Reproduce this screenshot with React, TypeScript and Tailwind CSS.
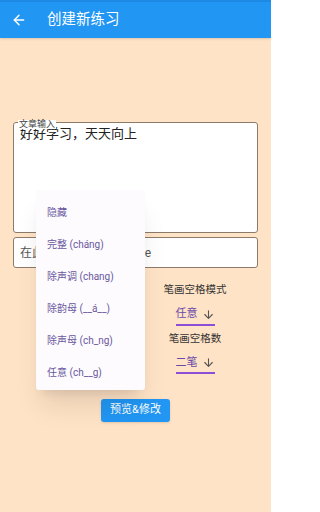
import React from 'react';
import { ArrowLeft, ArrowDown } from 'lucide-react';

const font = { fontFamily: 'Roboto, "Noto Sans CJK SC", sans-serif' };

const menuItems = ['隐藏', '完整 (cháng)', '除声调 (chang)', '除韵母 (__á__)', '除声母 (ch_ng)', '任意 (ch__g)'];

const Picker = ({ value }: { value: string }) => (
  <div className="flex items-center gap-1 border-b-2 border-[#8b4fd8] pb-[1px] text-[11px] text-[#6a4aa8]">
    <span>{value}</span>
    <ArrowDown size={13} strokeWidth={2} className="text-[#555]" />
  </div>
);

const App = () => {
  return (
    <div className="relative w-[271px] h-[512px] bg-[#ffe3c6] overflow-hidden" style={font}>
      {/* app bar */}
      <div className="h-[38px] bg-[#2196f3] border-t-2 border-[#1e88e5] flex items-center shadow">
        <ArrowLeft size={16} strokeWidth={2.2} className="text-white ml-[11px]" />
        <span className="ml-[20px] text-white text-[14.5px]">创建新练习</span>
      </div>

      <div className="px-[13px] pt-[84px] flex flex-col">
        {/* text area */}
        <div className="relative h-[111px] bg-white border border-[#8c7b6b] rounded-[3px] px-[6px] pt-[3px]">
          <span className="absolute -top-[3px] left-[4px] bg-white px-[1px] text-[9px] leading-none text-[#444]">文章输入</span>
          <p className="text-[13px] leading-[16px] text-[#222]">好好学习，天天向上</p>
        </div>

        {/* title input */}
        <div className="mt-[4px] h-[31px] bg-white border border-[#8c7b6b] rounded-[3px] px-[6px] flex items-center">
          <span className="text-[12px] text-[#555] whitespace-nowrap">在此输入练习的标题 title</span>
        </div>

        {/* settings */}
        <div className="mt-[14px] ml-[137px] w-[90px] flex flex-col items-center text-[10.5px] text-[#333]">
          <span className="leading-[16px]">笔画空格模式</span>
          <div className="mt-[8px]"><Picker value="任意" /></div>
          <span className="mt-[5px] leading-[16px]">笔画空格数</span>
          <div className="mt-[8px]"><Picker value="二笔" /></div>
        </div>

        <div className="mt-[25px] flex justify-center">
          <button className="w-[69px] h-[23px] rounded-[3px] bg-[#2196f3] text-white text-[11px] shadow">预览&amp;修改</button>
        </div>
      </div>

      {/* dropdown menu */}
      <div className="absolute left-[36px] top-[190px] w-[109px] h-[200px] bg-[#fdfbfd] rounded-[3px] shadow-xl pt-[6px]">
        {menuItems.map((item) => (
          <div key={item} className="h-[32px] flex items-center px-[11px] text-[10px] text-[#6a58a0]">
            {item}
          </div>
        ))}
      </div>
    </div>
  );
};

export default App;
